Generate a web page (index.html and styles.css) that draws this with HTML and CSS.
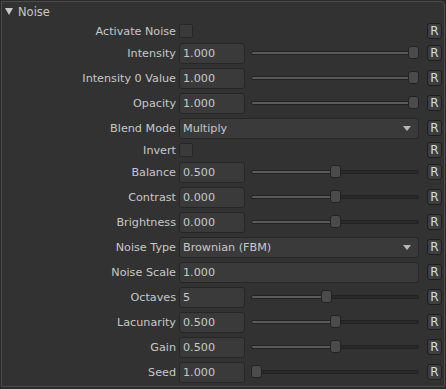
FILE: index.html
```html
<!DOCTYPE html>
<html>
<head>
<meta charset="utf-8">
<link rel="stylesheet" href="styles.css">
</head>
<body>
<div class="panel">
  <div class="header"><span class="tri"></span><span class="title">Noise</span></div>
  <div class="rows">
    <div class="row short"><span class="label">Activate Noise</span><div class="ctl"><span class="check"></span></div><span class="rbtn">R</span></div>
    <div class="row"><span class="label">Intensity</span><div class="ctl"><span class="field">1.000</span><div class="slider"><div class="track"><div class="fill" style="width:100%"></div></div><span class="handle" style="left:calc((100% - 11px) * 1)"></span></div></div><span class="rbtn">R</span></div>
    <div class="row"><span class="label">Intensity 0 Value</span><div class="ctl"><span class="field">1.000</span><div class="slider"><div class="track"><div class="fill" style="width:100%"></div></div><span class="handle" style="left:calc((100% - 11px) * 1)"></span></div></div><span class="rbtn">R</span></div>
    <div class="row"><span class="label">Opacity</span><div class="ctl"><span class="field">1.000</span><div class="slider"><div class="track"><div class="fill" style="width:100%"></div></div><span class="handle" style="left:calc((100% - 11px) * 1)"></span></div></div><span class="rbtn">R</span></div>
    <div class="row"><span class="label">Blend Mode</span><div class="ctl"><div class="select"><span>Multiply</span><span class="arrow"></span></div></div><span class="rbtn">R</span></div>
    <div class="row short"><span class="label">Invert</span><div class="ctl"><span class="check"></span></div><span class="rbtn">R</span></div>
    <div class="row"><span class="label">Balance</span><div class="ctl"><span class="field">0.500</span><div class="slider"><div class="track"><div class="fill" style="width:50%"></div></div><span class="handle" style="left:calc((100% - 11px) * 0.5)"></span></div></div><span class="rbtn">R</span></div>
    <div class="row"><span class="label">Contrast</span><div class="ctl"><span class="field">0.000</span><div class="slider"><div class="track"><div class="fill" style="width:50%"></div></div><span class="handle" style="left:calc((100% - 11px) * 0.5)"></span></div></div><span class="rbtn">R</span></div>
    <div class="row"><span class="label">Brightness</span><div class="ctl"><span class="field">0.000</span><div class="slider"><div class="track"><div class="fill" style="width:50%"></div></div><span class="handle" style="left:calc((100% - 11px) * 0.5)"></span></div></div><span class="rbtn">R</span></div>
    <div class="row"><span class="label">Noise Type</span><div class="ctl"><div class="select"><span>Brownian (FBM)</span><span class="arrow"></span></div></div><span class="rbtn">R</span></div>
    <div class="row"><span class="label">Noise Scale</span><div class="ctl"><span class="field wide">1.000</span></div><span class="rbtn">R</span></div>
    <div class="row"><span class="label">Octaves</span><div class="ctl"><span class="field">5</span><div class="slider"><div class="track"><div class="fill" style="width:44.4%"></div></div><span class="handle" style="left:calc((100% - 11px) * 0.444)"></span></div></div><span class="rbtn">R</span></div>
    <div class="row"><span class="label">Lacunarity</span><div class="ctl"><span class="field">0.500</span><div class="slider"><div class="track"><div class="fill" style="width:50%"></div></div><span class="handle" style="left:calc((100% - 11px) * 0.5)"></span></div></div><span class="rbtn">R</span></div>
    <div class="row"><span class="label">Gain</span><div class="ctl"><span class="field">0.500</span><div class="slider"><div class="track"><div class="fill" style="width:50%"></div></div><span class="handle" style="left:calc((100% - 11px) * 0.5)"></span></div></div><span class="rbtn">R</span></div>
    <div class="row"><span class="label">Seed</span><div class="ctl"><span class="field">1.000</span><div class="slider"><div class="track"><div class="fill" style="width:0%"></div></div><span class="handle" style="left:0"></span></div></div><span class="rbtn">R</span></div>
  </div>
</div>
</body>
</html>
```

FILE: styles.css
```css
html, body {
  margin: 0;
  padding: 0;
  background: #2b2b2b;
}
body {
  width: 446px;
  height: 389px;
  overflow: hidden;
  font-family: "DejaVu Sans", Verdana, sans-serif;
  font-size: 11.2px;
  color: #c8c8c8;
}
.panel {
  margin: 1px 1px 0 1px;
  height: 386px;
  box-sizing: border-box;
  background: #323232;
  border: 1px solid #4a4a4a;
  border-radius: 0 4px 0 0;
  display: flex;
  flex-direction: column;
}
.header {
  height: 19px;
  display: flex;
  align-items: center;
  padding-left: 3px;
  gap: 5px;
  font-size: 11.5px;
}
.tri {
  width: 0;
  height: 0;
  border-left: 4px solid transparent;
  border-right: 4px solid transparent;
  border-top: 7px solid #c8c8c8;
}
.rows {
  display: flex;
  flex-direction: column;
  gap: 3px;
  padding-top: 2px;
}
.row {
  display: grid;
  grid-template-columns: 174px 240px 15px;
  column-gap: 3px;
  align-items: center;
  height: 22px;
}
.row .rbtn { margin-left: 5px; }
.row.short { height: 16px; }
.label {
  text-align: right;
  white-space: nowrap;
}
.ctl {
  display: flex;
  align-items: center;
  height: 100%;
}
.check {
  width: 14px;
  height: 14px;
  box-sizing: border-box;
  background: #3a3a3a;
  border: 1px solid #262626;
  border-radius: 2px;
}
.field {
  width: 66px;
  height: 21px;
  box-sizing: border-box;
  background: #3a3a3a;
  border: 1px solid #262626;
  border-radius: 3px;
  padding-left: 3px;
  display: flex;
  align-items: center;
}
.field.wide { width: 240px; }
.slider {
  position: relative;
  flex: 1;
  margin-left: 6px;
  height: 14px;
  display: flex;
  align-items: center;
}
.track {
  width: 100%;
  height: 4px;
  box-sizing: border-box;
  background: #292929;
  border: 1px solid #222;
  border-radius: 2px;
  overflow: hidden;
}
.fill {
  height: 100%;
  background: #5a5a5a;
}
.handle {
  position: absolute;
  top: 0;
  width: 11px;
  height: 13px;
  box-sizing: border-box;
  background: #4b4b4b;
  border: 1px solid #222;
  border-radius: 3px;
}
.select {
  width: 240px;
  height: 21px;
  box-sizing: border-box;
  background: #3a3a3a;
  border: 1px solid #262626;
  border-radius: 3px;
  padding: 0 7px 0 3px;
  display: flex;
  align-items: center;
  justify-content: space-between;
}
.arrow {
  width: 0;
  height: 0;
  border-left: 4px solid transparent;
  border-right: 4px solid transparent;
  border-top: 5px solid #b8b8b8;
}
.rbtn {
  width: 15px;
  height: 16px;
  box-sizing: border-box;
  background: #3e3e3e;
  border: 1px solid #1e1e1e;
  border-radius: 3px;
  color: #d0dcea;
  font-size: 12px;
  display: flex;
  align-items: center;
  justify-content: center;
}
```
